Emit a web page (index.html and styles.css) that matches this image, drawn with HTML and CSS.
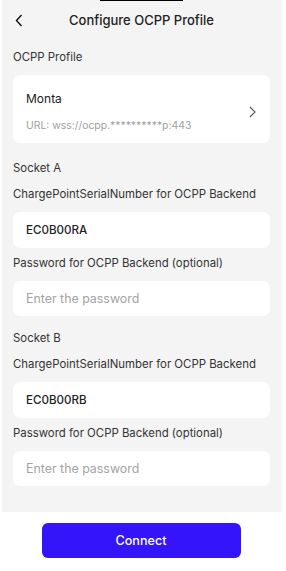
FILE: index.html
```html
<!DOCTYPE html>
<html lang="en">
<head>
    <meta charset="UTF-8">
    <meta name="viewport" content="width=device-width, initial-scale=1.0">
    <title>Configure OCPP Profile</title>
    <link rel="stylesheet" href="styles.css">
</head>
<body>
    <div class="notch"></div>
    <div class="page">
        <div class="header">
            <button class="back-btn">
                <svg width="8" height="13" viewBox="0 0 8 13"><path d="M6.5 1L1.5 6.5L6.5 12" fill="none" stroke="#111" stroke-width="1.4"/></svg>
            </button>
            <h1 class="title">Configure OCPP Profile</h1>
            <span class="spacer"></span>
        </div>

        <div class="label">OCPP Profile</div>
        <div class="profile-card">
            <div class="profile-info">
                <div class="profile-name">Monta</div>
                <div class="profile-url">URL: wss://ocpp.**********p:443</div>
            </div>
            <svg class="chevron" width="7" height="12" viewBox="0 0 7 12"><path d="M1 1L6 6L1 11" fill="none" stroke="#555" stroke-width="1.1"/></svg>
        </div>

        <div class="socket">
            <div class="label socket-title">Socket A</div>
            <div class="label">ChargePointSerialNumber for OCPP Backend</div>
            <input class="field value" type="text" value="EC0B00RA">
            <div class="label">Password for OCPP Backend (optional)</div>
            <input class="field" type="password" placeholder="Enter the password">
        </div>

        <div class="socket">
            <div class="label socket-title">Socket B</div>
            <div class="label">ChargePointSerialNumber for OCPP Backend</div>
            <input class="field value" type="text" value="EC0B00RB">
            <div class="label">Password for OCPP Backend (optional)</div>
            <input class="field" type="password" placeholder="Enter the password">
        </div>
    </div>

    <div class="footer">
        <button class="connect-btn">Connect</button>
    </div>
</body>
</html>
```

FILE: styles.css
```css
body {
    margin: 0;
    background: #fff;
    font-family: "Inter", "Noto Sans", sans-serif;
    color: #2a2a2a;
    position: relative;
}

.notch {
    position: absolute;
    top: 0;
    left: 100px;
    width: 83px;
    height: 1px;
    background: #000;
}

.page {
    margin: 0 4px 0 2px;
    padding: 0 12px 26px 11px;
    background: #f4f4f4;
}

.header {
    height: 40px;
    display: flex;
    align-items: center;
}

.back-btn {
    width: 24px;
    padding: 0 0 0 2px;
    background: none;
    border: none;
    display: flex;
    align-items: center;
    margin-top: 1px;
}

.spacer {
    width: 24px;
}

.title {
    flex: 1;
    margin: 0;
    text-align: center;
    font-size: 13px;
    font-weight: 500;
    color: #222;
}

.label {
    font-size: 11.4px;
    line-height: 16px;
    color: #333;
    margin-bottom: 10px;
}

.header + .label {
    margin-top: 9px;
}

.profile-card {
    height: 68px;
    box-sizing: border-box;
    padding: 16px 13px 10px 13px;
    background: #fff;
    border-radius: 7px;
    display: flex;
    align-items: center;
}

.profile-info {
    flex: 1;
    align-self: flex-start;
}

.profile-name {
    font-size: 12px;
    line-height: 16px;
    color: #222;
}

.profile-url {
    margin-top: 12px;
    font-size: 10.4px;
    line-height: 14px;
    color: #a0a0a0;
}

.chevron {
    margin-right: 1px;
}

.socket {
    margin-top: 17px;
}

.socket + .socket {
    margin-top: 14px;
}

.field {
    display: block;
    width: 100%;
    box-sizing: border-box;
    height: 35px;
    margin: 0 0 7px 0;
    padding: 0 13px;
    border: none;
    border-radius: 7px;
    background: #fff;
    font-family: inherit;
    font-size: 12.4px;
    color: #222;
    outline: none;
}

.field.value {
    font-size: 11.6px;
    font-weight: 500;
    height: 36px;
}

.field::placeholder {
    color: #a3a3a3;
}

.socket .field:last-child {
    margin-bottom: 0;
}

.footer {
    padding: 11px 0 0 0;
    display: flex;
    justify-content: center;
}

.connect-btn {
    width: 199px;
    height: 35px;
    margin-right: 4px;
    background: #3414f9;
    color: #fff;
    border: none;
    border-radius: 6px;
    font-family: inherit;
    font-size: 12.6px;
    font-weight: 500;
}
```
